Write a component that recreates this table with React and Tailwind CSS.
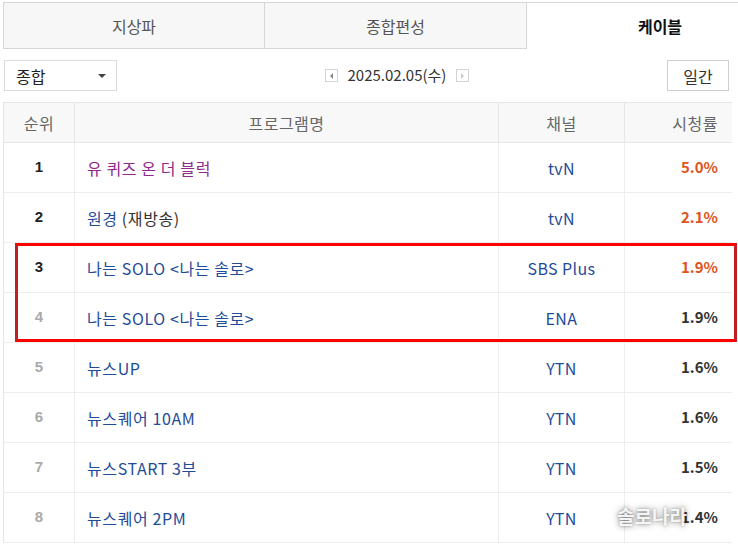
import React from "react";

const rows = [
  { rank: 1, title: "유 퀴즈 온 더 블럭", channel: "tvN", rate: "5.0%", top: true, purple: true },
  { rank: 2, title: "원경", extra: " (재방송)", channel: "tvN", rate: "2.1%", top: true },
  { rank: 3, title: "나는 SOLO <나는 솔로>", channel: "SBS Plus", rate: "1.9%", top: true },
  { rank: 4, title: "나는 SOLO <나는 솔로>", channel: "ENA", rate: "1.9%" },
  { rank: 5, title: "뉴스UP", channel: "YTN", rate: "1.6%" },
  { rank: 6, title: "뉴스퀘어 10AM", channel: "YTN", rate: "1.6%" },
  { rank: 7, title: "뉴스START 3부", channel: "YTN", rate: "1.5%" },
  { rank: 8, title: "뉴스퀘어 2PM", channel: "YTN", rate: "1.4%" },
];

const App = () => {
  return (
    <div
      className="relative w-[738px] h-[544px] overflow-hidden bg-white text-[15px] text-[#333]"
      style={{ fontFamily: '"Noto Sans CJK KR", "Noto Sans", sans-serif' }}
    >
      {/* tabs */}
      <div className="flex pl-[3px] pt-[2px]">
        <div className="w-[262px] shrink-0 h-[47px] flex items-center justify-center bg-[#f7f7f7] border border-[#d6d6d6] text-[#555] text-[16px]">
          지상파
        </div>
        <div className="w-[262px] shrink-0 h-[47px] flex items-center justify-center bg-[#f7f7f7] border border-l-0 border-[#d6d6d6] text-[#555] text-[16px]">
          종합편성
        </div>
        <div className="w-[266px] shrink-0 h-[47px] flex items-center justify-center border-t border-[#d6d6d6] font-bold text-[#111] text-[16px]">
          케이블
        </div>
      </div>

      {/* controls */}
      <div className="flex items-center mt-[11px] pl-[4px] pr-[9px] h-[31px]">
        <div className="w-[113px] h-[31px] border border-[#dcdcdc] flex items-center justify-between pl-[11px] pr-[10px] text-[#222] text-[16px]">
          <span>종합</span>
          <span className="w-0 h-0 border-l-[4px] border-r-[4px] border-t-[4px] border-l-transparent border-r-transparent border-t-[#444]" />
        </div>
        <div className="flex-1 flex items-center justify-center gap-[10px] pl-[10px] text-[#333]">
          <span className="w-[13px] h-[13px] border border-[#d4d4d4] flex items-center justify-center">
            <span className="w-0 h-0 border-t-[3px] border-b-[3px] border-r-[3px] border-t-transparent border-b-transparent border-r-[#888]" />
          </span>
          <span>2025.02.05(수)</span>
          <span className="w-[13px] h-[13px] border border-[#d4d4d4] flex items-center justify-center">
            <span className="w-0 h-0 border-t-[3px] border-b-[3px] border-l-[3px] border-t-transparent border-b-transparent border-l-[#ccc]" />
          </span>
        </div>
        <div className="w-[62px] h-[31px] border border-[#cfcfcf] flex items-center justify-center text-[#333] text-[16px]">
          일간
        </div>
      </div>

      {/* table */}
      <div className="mt-[11px] ml-[3px] w-[729px] border-l border-t border-[#e6e6e6] text-[16px]">
        <div className="flex h-[40px] bg-[#f8f8f8] border-b border-[#e6e6e6] text-[#666] tracking-[0.5px]">
          <div className="w-[71px] flex items-center justify-center border-r border-[#e6e6e6]">순위</div>
          <div className="w-[424px] flex items-center justify-center border-r border-[#e6e6e6]">프로그램명</div>
          <div className="w-[126px] flex items-center justify-center border-r border-[#e6e6e6]">채널</div>
          <div className="flex-1 flex items-center justify-end pr-[14px]">시청률</div>
        </div>
        {rows.map((r) => (
          <div key={r.rank} className="flex h-[50px] border-b border-[#eeeeee]">
            <div
              className={`w-[71px] flex items-center justify-center border-r border-[#eeeeee] font-bold text-[15px] ${
                r.top ? "text-[#222]" : "text-[#aaa]"
              }`}
              style={{ fontFamily: '"Liberation Sans", Arial, sans-serif' }}
            >
              {r.rank}
            </div>
            <div className="w-[424px] flex items-center pl-[12px] border-r border-[#eeeeee] tracking-[0.6px]">
              <span className={r.purple ? "text-[#8e2a8e]" : "text-[#1f4c99]"}>{r.title}</span>
              {r.extra && <span className="whitespace-pre text-[#333]">{r.extra}</span>}
            </div>
            <div className="w-[126px] flex items-center justify-center border-r border-[#eeeeee] text-[#1f4c99] tracking-[0.4px]">
              {r.channel}
            </div>
            <div
              className={`flex-1 flex items-center justify-end pr-[14px] font-bold text-[15px] ${
                r.top ? "text-[#e0541c]" : "text-[#333]"
              }`}
            >
              {r.rate}
            </div>
          </div>
        ))}
      </div>

      {/* highlight box */}
      <div className="absolute left-[15px] top-[243px] w-[722px] h-[99px] border-y-[3px] border-x-[3px] border-y-[#ff0000] border-x-[#c41e1e] pointer-events-none" />

      {/* watermark */}
      <div
        className="absolute left-[617px] top-[502px] text-[19px] font-bold text-white/90"
        style={{ textShadow: "0 0 6px rgba(0,0,0,0.5), 0 0 2px rgba(0,0,0,0.3)" }}
      >
        솔로나라
      </div>
    </div>
  );
};

export default App;
